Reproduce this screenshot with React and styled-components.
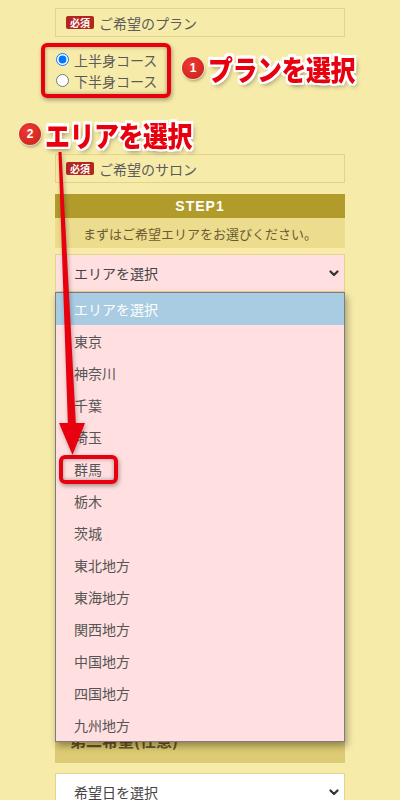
import React from 'react';
import styled, { createGlobalStyle } from 'styled-components';

const areas = [
  '東京',
  '神奈川',
  '千葉',
  '埼玉',
  '群馬',
  '栃木',
  '茨城',
  '東北地方',
  '東海地方',
  '関西地方',
  '中国地方',
  '四国地方',
  '九州地方'
];

const Chevron = () => (
  <svg width="10" height="7" viewBox="0 0 10 7">
    <polyline points="1.5,1.5 5,5 8.5,1.5" fill="none" stroke="#333" strokeWidth="2.2" strokeLinecap="round" strokeLinejoin="round" />
  </svg>
);

function App() {
  return (
    <Page>
      <GlobalStyle />
      <Column>
        <FieldLabel>
          <Badge>必須</Badge>ご希望のプラン
        </FieldLabel>
        <RadioGroup>
          <RadioRow>
            <input type="radio" name="plan" defaultChecked />
            上半身コース
          </RadioRow>
          <RadioRow>
            <input type="radio" name="plan" />
            下半身コース
          </RadioRow>
          <Highlight $top={-6} $left={-14} $width={130} $height={55} />
        </RadioGroup>

        <FieldLabel $mt={63}>
          <Badge>必須</Badge>ご希望のサロン
        </FieldLabel>
        <StepHeader $mt={11}>STEP1</StepHeader>
        <StepNote>まずはご希望エリアをお選びください。</StepNote>
        <SelectWrap>
          <SelectBox $bg="#ffdfe0">
            エリアを選択
            <Chevron />
          </SelectBox>
          <Dropdown>
            <Option $active>エリアを選択</Option>
            {areas.map(name => (
              <Option key={name}>
                {name}
                {name === '群馬' && <Highlight $top={2} $left={3} $width={59} $height={29} />}
              </Option>
            ))}
          </Dropdown>
        </SelectWrap>

        {/* the rest of the form sits behind the open list */}
        <SectionBar $mt={430}>第二希望(任意)</SectionBar>
        <SelectBox $mt={10}>
          希望日を選択
          <Chevron />
        </SelectBox>
      </Column>

      <Arrow width="400" height="800" viewBox="0 0 400 800">
        <polygon points="58.5,152 61.5,152 76,427 68,427" fill="#e8000f" />
        <polygon points="59,423 85,423 72.5,455" fill="#e8000f" />
      </Arrow>

      <Callout $top={52} $left={182}>
        <NumberBadge>1</NumberBadge>
        <CalloutText>プランを選択</CalloutText>
      </Callout>
      <Callout $top={118} $left={19}>
        <NumberBadge>2</NumberBadge>
        <CalloutText>エリアを選択</CalloutText>
      </Callout>
    </Page>
  );
}

const GlobalStyle = createGlobalStyle`
  body {
    margin: 0;
    background: #f7eba9;
    font-family: "Noto Sans CJK JP", "Noto Sans", sans-serif;
  }
`;

const Page = styled.div`
  position: relative;
  width: 400px;
  height: 800px;
  overflow: hidden;
  background: #f7eba9;
`;

const Column = styled.div`
  width: 290px;
  margin: 0 auto;
  padding-top: 8px;
  display: flex;
  flex-direction: column;
`;

const FieldLabel = styled.div`
  margin-top: ${({ $mt }) => $mt || 0}px;
  height: 29px;
  box-sizing: border-box;
  border: 1px solid #e4d38a;
  display: flex;
  align-items: center;
  padding-left: 10px;
  gap: 5px;
  font-size: 14px;
  color: #5b5b5b;
`;

const Badge = styled.span`
  background: #b3251f;
  color: #fff;
  font-size: 10px;
  font-weight: 700;
  line-height: 13px;
  padding: 0 4px;
  border-radius: 2px;
`;

const RadioGroup = styled.div`
  position: relative;
  margin-top: 12px;
  display: flex;
  flex-direction: column;
  align-self: flex-start;
`;

const RadioRow = styled.label`
  height: 21px;
  display: flex;
  align-items: center;
  gap: 5px;
  padding-left: 1px;
  font-size: 14px;
  color: #5b5b5b;

  input {
    width: 13px;
    height: 13px;
    margin: 0;
  }
`;

const Highlight = styled.span`
  position: absolute;
  top: ${({ $top }) => $top}px;
  left: ${({ $left }) => $left}px;
  width: ${({ $width }) => $width}px;
  height: ${({ $height }) => $height}px;
  box-sizing: border-box;
  border: 4px solid #e8000f;
  border-radius: 6px;
  box-shadow: 1px 2px 4px rgba(0, 0, 0, 0.35), inset 0 0 4px rgba(0, 0, 0, 0.35);
  pointer-events: none;
`;

const StepHeader = styled.div`
  margin-top: ${({ $mt }) => $mt || 0}px;
  height: 24px;
  background: #b19b2a;
  color: #fff;
  font-family: "Liberation Sans", Arial, sans-serif;
  font-weight: 700;
  font-size: 14px;
  letter-spacing: 1px;
  display: flex;
  align-items: center;
  justify-content: center;
`;

const StepNote = styled.div`
  height: 30px;
  background: #ecdc8e;
  color: #6b5b32;
  font-size: 13px;
  display: flex;
  align-items: center;
  justify-content: center;
`;

const SelectWrap = styled.div`
  position: relative;
  margin-top: 6px;
`;

const SelectBox = styled.div`
  margin-top: ${({ $mt }) => $mt || 0}px;
  height: 38px;
  box-sizing: border-box;
  background: ${({ $bg }) => $bg || '#fff'};
  border: 1px solid #e6d48c;
  display: flex;
  align-items: center;
  justify-content: space-between;
  padding: 0 5px 0 18px;
  font-size: 14px;
  color: #444;
`;

const Dropdown = styled.ul`
  position: absolute;
  top: 100%;
  left: 0;
  right: 0;
  margin: 0;
  padding: 0;
  list-style: none;
  background: #ffdfe0;
  border: 1px solid #7d7d7d;
  box-shadow: 2px 4px 7px rgba(0, 0, 0, 0.35);
  z-index: 2;
`;

const Option = styled.li`
  position: relative;
  height: 32px;
  display: flex;
  align-items: center;
  padding-left: 18px;
  font-size: 14px;
  color: ${({ $active }) => ($active ? '#fff' : '#555')};
  background: ${({ $active }) => ($active ? '#a9cce3' : 'transparent')};
`;

const SectionBar = styled.div`
  margin-top: ${({ $mt }) => $mt || 0}px;
  height: 41px;
  box-sizing: border-box;
  padding: 0 0 6px 15px;
  background: #dccb74;
  color: #6a5520;
  font-size: 16px;
  font-weight: 700;
  display: flex;
  align-items: center;
`;

const Arrow = styled.svg`
  position: absolute;
  top: 0;
  left: 0;
  z-index: 3;
  pointer-events: none;
  filter: drop-shadow(1px 2px 2px rgba(0, 0, 0, 0.3));
`;

const Callout = styled.div`
  position: absolute;
  top: ${({ $top }) => $top}px;
  left: ${({ $left }) => $left}px;
  z-index: 4;
  display: flex;
  align-items: center;
  gap: 4px;
`;

const NumberBadge = styled.span`
  width: 22px;
  height: 22px;
  border-radius: 50%;
  background: radial-gradient(circle at 40% 35%, #ee3a33, #c81e18);
  box-shadow: 0 0 0 1px rgba(255, 255, 255, 0.6), 1px 2px 3px rgba(0, 0, 0, 0.35);
  color: #fff;
  font-family: "Liberation Sans", Arial, sans-serif;
  font-size: 12px;
  font-weight: 700;
  display: flex;
  align-items: center;
  justify-content: center;
`;

const CalloutText = styled.span`
  display: inline-block;
  font-size: 25px;
  font-weight: 900;
  line-height: 32px;
  letter-spacing: -0.5px;
  color: #e8000f;
  transform: scaleY(1.15);
  text-shadow: -2px -2px 0 #fff, 2px -2px 0 #fff, -2px 2px 0 #fff, 2px 2px 0 #fff,
    0 -2px 0 #fff, 0 2px 0 #fff, -2px 0 0 #fff, 2px 0 0 #fff,
    2px 3px 5px rgba(0, 0, 0, 0.45);
`;

export default App;
